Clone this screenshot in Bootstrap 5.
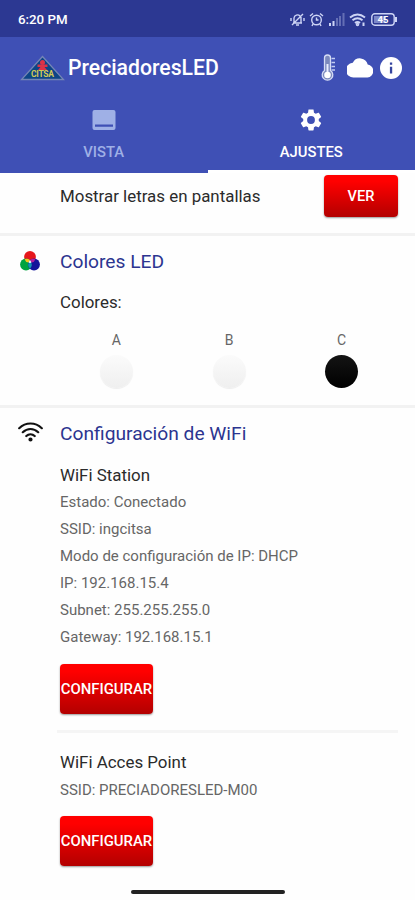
<!DOCTYPE html>
<html lang="es">
<head>
<meta charset="utf-8">
<meta name="viewport" content="width=device-width, initial-scale=1">
<title>PreciadoresLED</title>
<link href="https://cdn.jsdelivr.net/npm/bootstrap@5.3.0/dist/css/bootstrap.min.css" rel="stylesheet">
<style>
body{font-family:Roboto,"Liberation Sans",sans-serif;color:#2b2b2b;background:#fefefe;height:900px;overflow:hidden}
svg{display:block;flex:none}
.status{height:37px;background:#2c3892;padding:2px 17px 0 18px;font-size:13.3px;font-weight:500}
.appbar{height:61px;background:#3f50b5;padding:0 13px 0 20px}
.title{font-size:21.2px;line-height:28px;font-weight:500;margin-left:3px}
.tabs{height:75px;background:#3f50b5}
.tab{height:75px;padding-top:9px;font-size:14.8px;line-height:20px;font-weight:500;color:#9fb0e6}
.tab.on{color:#fff;border-bottom:3px solid #fff}
.tab svg{margin-bottom:9px}
.screens{height:60px;padding:1px 17px 0 60px}
.item-title{font-size:16.9px;line-height:22px}
.rule{height:3px;background:#f2f2f2}
.red{background:linear-gradient(#ff0000 15%,#b30000);color:#fff;border:0;border-radius:4px;box-shadow:0 1px 2px #0006;font-size:14.9px;font-weight:500;padding:0;line-height:20px;--bs-btn-color:#fff}
.ver{width:74px;height:42px;font-size:14.6px}
.conf{width:93px;height:50px}
.side{width:60px;padding-left:18px}
.head{font-size:19.2px;line-height:26px;color:#2c3590}
.swatches{padding:17px 17px 0 0}
.swatches .col{font-size:14px;line-height:20px;color:#666}
.dot{width:33px;height:33px;border-radius:50%;margin-top:5px;background:linear-gradient(#fbfbfb,#efefef);box-shadow:0 1px 1px #0001}
.dot.dark{background:linear-gradient(#141414,#000);box-shadow:none}
.info{font-size:15px;line-height:27px;color:#666}
.home{width:154px;height:4px;border-radius:2px;background:#222;margin-top:24px}
</style>
<script src="https://cdn.jsdelivr.net/npm/bootstrap@5.3.0/dist/js/bootstrap.bundle.min.js"></script>
</head>
<body>
<header class="text-white">
  <div class="status d-flex align-items-center justify-content-between">
    <span class="clock">6:20 PM</span>
    <div class="d-flex align-items-center">
      <svg width="15" height="15" viewBox="0 0 15 15" fill="none" stroke="#cdd4f5" stroke-width="1.4"><path d="M4 10.500V6a3.500 3.500 0 0 1 6-2M11 5v5.500M3 11h9M6 13h3M2 13 13 2M1 6v3M14 6v3"/></svg>
      <svg class="ms-1" width="15" height="15" viewBox="0 0 15 15" fill="none" stroke="#cdd4f5" stroke-width="1.4"><circle cx="7.500" cy="8" r="4.800"/><path d="M1 4l3-2.500M14 4l-3-2.500M7.500 5.500V8h2M4 12l-1 2M11 12l1 2"/></svg>
      <svg class="ms-1" width="17" height="13" viewBox="0 0 17 13" fill="#cdd4f5"><path d="M1 10h2v3H1zM4.500 8h2v5h-2z"/><path opacity=".35" d="M8 5h2v8H8zM11 3h2v10h-2zM14.500 0h2v13h-2z"/></svg>
      <svg class="ms-1" width="18" height="14" viewBox="0 0 18 14" fill="none" stroke="#cdd4f5" stroke-width="2"><path d="M1 4.500q7.500-6 15 0M3.500 7.300q5-4 10 0M6 10q2.500-2 5 0"/><circle cx="8.500" cy="11.500" r=".8"/><path d="M14.500 9.500v3.500"/></svg>
      <svg class="ms-1" width="27" height="13" viewBox="0 0 27 13"><rect x=".8" y=".8" width="22.400" height="11.400" rx="3" fill="none" stroke="#cdd4f5" stroke-width="1.400"/><rect x="3" y="3" width="12" height="7" fill="#7d88c8"/><path d="M25 4v5" stroke="#cdd4f5" stroke-width="2"/><text x="12" y="10" text-anchor="middle" font-size="9.500" font-weight="700" fill="#fff">45</text></svg>
    </div>
  </div>
  <div class="appbar d-flex align-items-center">
    <svg width="45" height="26" viewBox="0 0 45 26"><path d="M22.500 1.500 43.500 24.500H1.500z" fill="#0d4585" stroke="#7485b5" stroke-width="1.300"/><circle cx="22.500" cy="7.500" r="2.500" fill="#dc3347"/><path d="M17.500 9.500h10v2.500h-3l2.500 3h-9l2.500-3h-3z" fill="#dc3347"/><text x="22.500" y="21.800" text-anchor="middle" font-size="8.500" font-weight="700" textLength="23" fill="#d3c956">CITSA</text></svg>
    <span class="title me-auto">PreciadoresLED</span>
    <svg width="16" height="27" viewBox="0 0 16 27"><path d="M3.500 4a3 3 0 0 1 6 0v12.500a5.300 5.300 0 1 1-6 0z" fill="#7b89bd" stroke="#d5dcf5" stroke-width="1.300"/><path d="M6.500 10v9" stroke="#e8edff" stroke-width="2"/><circle cx="6.500" cy="21" r="3.300" fill="#fff"/><path d="M10.500 4.500H14M10.500 8.500H14M10.500 12.500H14M10.500 16H14" stroke="#c3cdf3" stroke-width="1.500"/></svg>
    <svg style="margin-left:10px" width="26" height="22" viewBox="0 0 26 22" fill="#fff"><path d="M20.700 7.600A8 8 0 0 0 5.800 5.700 7.200 7.200 0 0 0 7 20.500h13.500a6.500 6.500 0 0 0 .2-12.900z"/></svg>
    <svg style="margin-left:7px" width="22" height="22" viewBox="0 0 22 22"><circle cx="11" cy="11" r="11" fill="#fff"/><path d="M9.900 5.400h2.300v2.300H9.900zM9.900 9.800h2.300v6.800H9.900z" fill="#35449e"/></svg>
  </div>
  <nav class="tabs d-flex">
    <div class="tab w-50 d-flex flex-column align-items-center"><svg width="26" height="26" viewBox="0 0 26 26"><path d="M3.500 3h19A2 2 0 0 1 24.500 5v16a2 2 0 0 1-2 2h-19a2 2 0 0 1-2-2V5a2 2 0 0 1 2-2zM4 17.500v2.300h18v-2.300z" fill="#9fb0e6" fill-rule="evenodd"/></svg><span>VISTA</span></div>
    <div class="tab on w-50 d-flex flex-column align-items-center"><svg width="26" height="26" viewBox="0 0 24 24" fill="#fff"><path d="M19.140 12.940c.04-.3.060-.61.060-.94 0-.32-.02-.64-.07-.94l2.030-1.580c.18-.14.23-.41.120-.61l-1.920-3.320c-.12-.22-.37-.29-.59-.22l-2.390.96c-.5-.38-1.030-.7-1.620-.94l-.36-2.540c-.04-.24-.24-.41-.48-.41h-3.840c-.24 0-.43.17-.47.41l-.36 2.540c-.59.24-1.130.57-1.620.94l-2.390-.96c-.22-.08-.47 0-.59.22L2.740 8.870c-.12.21-.08.47.12.61l2.030 1.580c-.05.3-.09.63-.09.940s.02.640.07.940l-2.030 1.580c-.18.14-.23.41-.12.61l1.920 3.320c.12.22.37.29.59.22l2.390-.96c.5.380 1.030.7 1.620.94l.36 2.540c.05.24.24.41.48.41h3.840c.24 0 .44-.17.47-.41l.36-2.540c.59-.24 1.130-.56 1.620-.94l2.390.96c.22.08.47 0 .59-.22l1.920-3.320c.12-.22.07-.47-.12-.61l-2.010-1.580zM12 15.600A3.600 3.600 0 1 1 12 8.400a3.600 3.600 0 0 1 0 7.200z"/></svg><span>AJUSTES</span></div>
  </nav>
</header>
<main>
  <div class="screens d-flex justify-content-between align-items-start">
    <span class="item-title" style="margin-top:11px">Mostrar letras en pantallas</span>
    <button class="btn red ver" type="button" style="margin-top:1px">VER</button>
  </div>
  <div class="rule"></div>
  <section class="d-flex" style="height:169px">
    <div class="side" style="padding-top:13px"><svg width="24" height="24" viewBox="0 0 24 24"><circle cx="12" cy="8" r="5.900" fill="#e6161b"/><circle cx="8" cy="15.500" r="5.900" fill="#00a33f"/><circle cx="16" cy="15.500" r="5.900" fill="#14149a"/><path d="M6.600 10.200Q9.500 9 12 11.200L10.600 13.600Q7.300 13 6.600 10.200z" fill="#f5c520"/><path d="M17.400 10.200Q14.500 9 12 11.200L13.400 13.600Q16.700 13 17.400 10.200z" fill="#b01fa0"/><path d="M12 11.200Q15.500 15.500 12 19.800 8.500 15.500 12 11.200z" fill="#1597b0"/><path d="M12 11l1.400 2.600q-1.400.8-2.800 0z" fill="#fff"/></svg></div>
    <div class="flex-fill" style="padding-top:13px">
      <h2 class="head fw-normal mb-0">Colores LED</h2>
      <div class="item-title" style="margin-top:16px">Colores:</div>
      <div class="swatches row g-0 text-center">
        <div class="col d-flex flex-column align-items-center">A<span class="dot"></span></div>
        <div class="col d-flex flex-column align-items-center">B<span class="dot"></span></div>
        <div class="col d-flex flex-column align-items-center">C<span class="dot dark"></span></div>
      </div>
    </div>
  </section>
  <div class="rule"></div>
  <section class="d-flex">
    <div class="side" style="padding-top:12px"><svg width="25" height="24" viewBox="0 0 25 24" fill="none" stroke="#111" stroke-width="2.200" stroke-linecap="round"><path d="M1.200 8.200c6.500-6.300 16.100-6.300 22.600 0M4.800 12.200c4.500-4.300 10.900-4.300 15.400 0M8.300 16c2.400-2.300 6-2.300 8.400 0"/><circle cx="12.500" cy="19.500" r="1.400" fill="#111" stroke-width="1.400"/></svg></div>
    <div class="flex-fill" style="padding:13px 17px 0 0">
      <h2 class="head fw-normal mb-0">Configuración de WiFi</h2>
      <div class="item-title" style="margin-top:17px">WiFi Station</div>
      <div class="info" style="margin-top:3px">
        <div>Estado: Conectado</div>
        <div>SSID: ingcitsa</div>
        <div>Modo de configuración de IP: DHCP</div>
        <div>IP: 192.168.15.4</div>
        <div>Subnet: 255.255.255.0</div>
        <div>Gateway: 192.168.15.1</div>
      </div>
      <button class="btn red conf d-block" type="button" style="margin-top:13px">CONFIGURAR</button>
      <div class="rule" style="margin:16px 0 0 -3px;background:#f5f5f5"></div>
      <div class="item-title" style="margin-top:18px">WiFi Acces Point</div>
      <div class="info" style="margin-top:4px">SSID: PRECIADORESLED-M00</div>
      <button class="btn red conf d-block" type="button" style="margin-top:12px">CONFIGURAR</button>
    </div>
  </section>
  <div class="home mx-auto"></div>
</main>
</body>
</html>
